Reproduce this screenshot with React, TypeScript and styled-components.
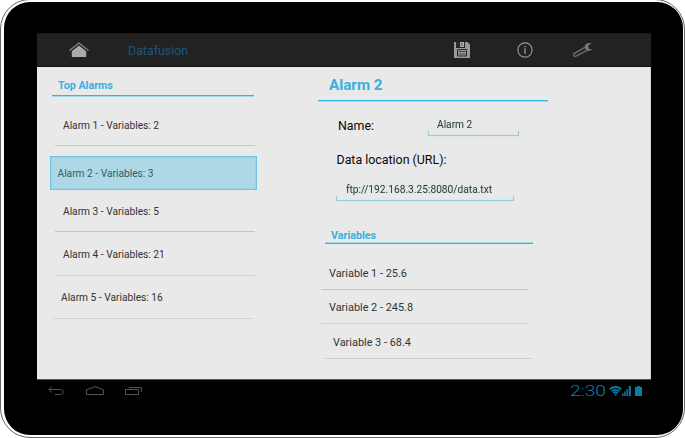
import React from "react";
import styled, { createGlobalStyle } from "styled-components";

const GlobalStyle = createGlobalStyle`
  * { box-sizing: border-box; }
  html { background: #fff; }
  body { margin: 0; height: 438px; font-family: Roboto, "Liberation Sans", sans-serif; overflow: hidden; }
  #root { display: flow-root; }
`;

const Tablet = styled.div`
  width: 685px;
  height: 439px;
  margin-top: -1px;
  padding: 2px 0 0 3px;
  border: 1px solid #666;
  border-radius: 30px;
  background: #fff;
`;

const Bezel = styled.div`
  width: 679px;
  height: 433px;
  padding: 31px 0 0 33px;
  border-radius: 26px;
  background: #000;
`;

const Screen = styled.div`
  width: 614px;
  height: 369px;
  display: flex;
  flex-direction: column;
`;

const ActionBar = styled.header`
  height: 34px;
  display: flex;
  align-items: center;
  background: #222;
  border-top: 1px solid #191919;
  border-bottom: 1px solid #111;
`;

const IconSlot = styled.span<{ $left: number; $width: number }>`
  display: flex;
  flex: none;
  width: ${(p) => p.$width}px;
  margin-left: ${(p) => p.$left}px;
`;

const AppName = styled.h1<{ $width: number }>`
  width: ${(p) => p.$width}px;
  margin: 1px 0 0 39px;
  font-size: 12.4px;
  line-height: 16px;
  font-weight: 400;
  color: #1b587c;
`;

const Content = styled.main`
  height: 312px;
  display: grid;
  grid-template-columns: 281px 1fr;
  background: #e9e9e9;
  border-right: 1px solid #d2d2d2;
`;

const Column = styled.section`
  display: flex;
  flex-direction: column;
  align-items: flex-start;
`;

const Heading = styled.h2<{
  $size: number; $width: number; $height: number; $top: number; $left: number; $indent: number; $line: number; $faded?: boolean;
}>`
  width: ${(p) => p.$width}px;
  height: ${(p) => p.$height}px;
  margin: ${(p) => p.$top}px 0 0 ${(p) => p.$left}px;
  padding-left: ${(p) => p.$indent}px;
  background: linear-gradient(
    ${(p) => (p.$faded ? "#a3d8ec 1px, #37b4e3 1px" : "#37b4e3 1px, #a3d8ec 1px")}
  ) left bottom / 100% 2px no-repeat;
  font-size: ${(p) => p.$size}px;
  line-height: ${(p) => p.$line}px;
  font-weight: 700;
  color: #37b0e2;
`;

const Row = styled.div<{
  $left: number; $width: number; $height: number; $indent: number; $line: number; $size: number; $rule?: string;
}>`
  width: ${(p) => p.$width}px;
  height: ${(p) => p.$height}px;
  margin-left: ${(p) => p.$left}px;
  padding-left: ${(p) => p.$indent}px;
  border-bottom: 1px solid ${(p) => p.$rule ?? "#c9c9c9"};
  font-size: ${(p) => p.$size}px;
  line-height: ${(p) => p.$line}px;
  white-space: nowrap;
  color: #333;
`;

const SelectedRow = styled.div`
  width: 207px;
  height: 34px;
  margin: 10px 0 0 13px;
  padding-left: 6.5px;
  border: 1px solid #6fc4e3;
  box-shadow: inset 0 0 0 1px #9bd2e6;
  background: #afd8e6;
  font-size: 10.2px;
  line-height: 34px;
  color: #315a68;
`;

const FieldRow = styled.div`
  display: flex;
  margin: 15px 0 0 20px;
`;

const Label = styled.label<{ $width?: number }>`
  width: ${(p) => (p.$width ? `${p.$width}px` : "auto")};
  height: 18px;
  font-size: 12.4px;
  line-height: 17px;
  color: #080808;
`;

const UrlLabel = styled(Label)`
  margin: 15px 0 0 18.5px;
`;

const Value = styled.div<{ $width: number; $indent: number }>`
  width: ${(p) => p.$width}px;
  height: 19px;
  padding-left: ${(p) => p.$indent}px;
  background:
    linear-gradient(#94cbdd, #94cbdd) left bottom / 1px 5px no-repeat,
    linear-gradient(#94cbdd, #94cbdd) right bottom / 1px 5px no-repeat,
    linear-gradient(#94cbdd, #94cbdd) left bottom / 100% 1px no-repeat;
  font-size: 10.2px;
  line-height: 15px;
  white-space: nowrap;
  color: #333;
  filter: drop-shadow(0 0 1px #c5e4ee);
`;

const UrlValue = styled(Value)`
  margin: 13px 0 0 18px;
`;

const NavBar = styled.footer`
  height: 23px;
  display: flex;
  align-items: center;
  border-top: 1px solid #555;
`;

const ClockSlot = styled.span`
  display: flex;
  margin-left: 428px;
`;

const alarms = [
  { text: "Alarm 3 - Variables: 5", left: 18, indent: 8, height: 42, line: 43, rule: "#c4c4c4" },
  { text: "Alarm 4 - Variables: 21", left: 18, indent: 8, height: 44, line: 46, rule: "#d1d1d1" },
  { text: "Alarm 5 - Variables: 16", left: 16, indent: 8, height: 43, line: 44, rule: "#d1d1d1" },
];

const variables = [
  { text: "Variable 1 - 25.6", left: 3, indent: 8, height: 46, line: 60, size: 10.9, rule: "#c4c4c4" },
  { text: "Variable 2 - 245.8", left: 3, indent: 8, height: 34, line: 36, size: 10.9, rule: "#d1d1d1" },
  { text: "Variable 3 - 68.4", left: 7, indent: 8, height: 35, line: 38, size: 10.9, rule: "#cdcdcd" },
];

const HomeIcon = () => (
  <svg width="20" height="16" viewBox="0 0 20 16">
    <path d="M.5 8.5 10 1l9.5 7.5" fill="none" stroke="#888" strokeWidth="1.1" />
    <path d="M2.8 9.3 10 3.4l7.2 5.9V15H2.8Z" fill="#aaa" />
  </svg>
);

const SaveIcon = () => (
  <svg width="16" height="16" viewBox="0 0 16 16">
    <path d="M0 0h2v6h9V0h2.5L16 2.5V16H0Z" fill="#999" />
    <path d="M2 0h9v5H2Z" fill="#292929" />
    <path d="M6 0h4v5H6Z" fill="#aaa" />
    <path d="M7 1h1.2v3H7Z" fill="#666" />
    <path d="M3.5 7.5h9V14h-9Z" fill="#999" stroke="#292929" />
    <path d="M4.5 9.5h7M4.5 12h7" stroke="#444" />
  </svg>
);

const InfoIcon = () => (
  <svg width="16" height="16" viewBox="0 0 16 16" fill="none">
    <circle cx="8" cy="8" r="7.1" stroke="#999" strokeWidth="1.1" />
    <path d="M8 4v1.3M8 6.3v5.5" stroke="#aaa" strokeWidth="1.2" />
  </svg>
);

const WrenchIcon = () => (
  <svg width="20" height="16" viewBox="0 0 20 16" fill="none">
    <path d="M11.8 5.4 1.5 11.3c-1.6 1.1-.4 3.7 1.6 2.9L13.5 8.6" stroke="#707070" strokeWidth="1.4" />
    <path d="M19 1.7C15.5.2 12.1 1.5 11.7 4.4l1.2 3.8c2 1.3 4.6.9 6.3-.9l-3.2-.2-.8-2.5 1-2Z" fill="#777" />
  </svg>
);

const BackIcon = () => (
  <svg width="16" height="10" viewBox="0 0 16 10" fill="none" stroke="#555">
    <path d="M3.8.5.8 3.5l3 2.7M1 3.5h11.5c3.5 0 3.5 5 0 5H7" />
  </svg>
);

const NavHomeIcon = () => (
  <svg width="18" height="10" viewBox="0 0 18 10" fill="none" stroke="#555">
    <path d="M.6 8.5V3.7L9 .7l8.4 3v4.8Z" />
  </svg>
);

const RecentIcon = () => (
  <svg width="17" height="10" viewBox="0 0 17 10" fill="none" stroke="#555">
    <path d="M.5 3.5h13v5H.5ZM4 1.5h12.4V6" />
  </svg>
);

const Clock = () => (
  <svg width="36" height="14" viewBox="0 0 36 14">
    <text x="0" y="12" fontFamily="Roboto, sans-serif" fontSize="14" fontWeight="300" fill="#0884aa" textLength="36" lengthAdjust="spacingAndGlyphs">2:30</text>
  </svg>
);

const WifiIcon = () => (
  <svg width="13" height="10" viewBox="0 0 13 10" fill="none" stroke="#087ea4">
    <path d="M.7 3.3Q6.5-1.2 12.3 3.3" strokeWidth="2" />
    <path d="M2.6 5.3Q6.5 2.3 10.4 5.3" strokeWidth="1.7" />
    <path d="M4.3 7Q6.5 5.3 8.7 7" strokeWidth="1.6" />
    <path d="M5 7.8h3L6.5 9.7Z" fill="#087ea4" stroke="none" />
  </svg>
);

const SignalIcon = () => (
  <svg width="9" height="10" viewBox="0 0 9 10" fill="#087294">
    <path d="M0 7.5h1.6V10H0ZM2.2 5.5h1.6V10H2.2ZM4.4 3.2h1.6V10H4.4ZM6.7 0H9v10H6.7Z" />
  </svg>
);

const BatteryIcon = () => (
  <svg width="7" height="10" viewBox="0 0 7 10">
    <path d="M2 0h3v1h2v9H0V1h2Z" fill="#087ea4" />
  </svg>
);

export default function App() {
  return (
    <>
      <GlobalStyle />
      <Tablet>
        <Bezel>
          <Screen>
            <ActionBar>
              <IconSlot $left={32} $width={20}><HomeIcon /></IconSlot>
              <AppName $width={288}>Datafusion</AppName>
              <IconSlot $left={38} $width={16}><SaveIcon /></IconSlot>
              <IconSlot $left={47} $width={16}><InfoIcon /></IconSlot>
              <IconSlot $left={40} $width={20}><WrenchIcon /></IconSlot>
            </ActionBar>
            <Content>
              <Column>
                <Heading $size={10.7} $width={202} $height={20} $top={10} $left={15} $indent={6} $line={17}>Top Alarms</Heading>
                <Row $left={18} $width={200} $height={49} $indent={8} $line={57} $size={10.2}>Alarm 1 - Variables: 2</Row>
                <SelectedRow>Alarm 2 - Variables: 3</SelectedRow>
                {alarms.map((a) => (
                  <Row key={a.text} $left={a.left} $width={200} $height={a.height} $indent={a.indent} $line={a.line} $size={10.2} $rule={a.rule}>{a.text}</Row>
                ))}
              </Column>
              <Column>
                <Heading $size={15.2} $width={230} $height={27} $top={8} $left={0} $indent={11} $line={21}>Alarm 2</Heading>
                <FieldRow>
                  <Label $width={89.5}>Name:</Label>
                  <Value $width={91} $indent={9.5}>Alarm 2</Value>
                </FieldRow>
                <UrlLabel>Data location (URL):</UrlLabel>
                <UrlValue $width={178} $indent={10}>ftp://192.168.3.25:8080/data.txt</UrlValue>
                <Heading $faded $size={10.7} $width={208} $height={17} $top={26} $left={7} $indent={6} $line={17}>Variables</Heading>
                {variables.map((v) => (
                  <Row key={v.text} $left={v.left} $width={207} $height={v.height} $indent={v.indent} $line={v.line} $size={v.size} $rule={v.rule}>{v.text}</Row>
                ))}
              </Column>
            </Content>
            <NavBar>
              <IconSlot $left={11} $width={16}><BackIcon /></IconSlot>
              <IconSlot $left={22} $width={18}><NavHomeIcon /></IconSlot>
              <IconSlot $left={21} $width={17}><RecentIcon /></IconSlot>
              <ClockSlot><Clock /></ClockSlot>
              <IconSlot $left={3} $width={13}><WifiIcon /></IconSlot>
              <IconSlot $left={0} $width={9}><SignalIcon /></IconSlot>
              <IconSlot $left={4} $width={7}><BatteryIcon /></IconSlot>
            </NavBar>
          </Screen>
        </Bezel>
      </Tablet>
    </>
  );
}
